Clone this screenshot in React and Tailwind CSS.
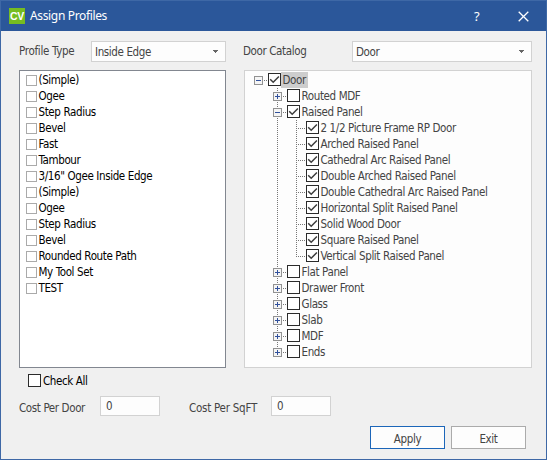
import React from "react";

const profiles = [
  "(Simple)",
  "Ogee",
  "Step Radius",
  "Bevel",
  "Fast",
  "Tambour",
  '3/16" Ogee Inside Edge',
  "(Simple)",
  "Ogee",
  "Step Radius",
  "Bevel",
  "Rounded Route Path",
  "My Tool Set",
  "TEST",
];

const catalog = [
  { label: "Door", level: 0, state: "open", checked: true, selected: true },
  { label: "Routed MDF", level: 1, state: "closed" },
  { label: "Raised Panel", level: 1, state: "open", checked: true },
  { label: "2 1/2 Picture Frame RP Door", level: 2, checked: true },
  { label: "Arched Raised Panel", level: 2, checked: true },
  { label: "Cathedral Arc Raised Panel", level: 2, checked: true },
  { label: "Double Arched Raised Panel", level: 2, checked: true },
  { label: "Double Cathedral Arc Raised Panel", level: 2, checked: true },
  { label: "Horizontal Split Raised Panel", level: 2, checked: true },
  { label: "Solid Wood Door", level: 2, checked: true },
  { label: "Square Raised Panel", level: 2, checked: true },
  { label: "Vertical Split Raised Panel", level: 2, checked: true, last: true },
  { label: "Flat Panel", level: 1, state: "closed" },
  { label: "Drawer Front", level: 1, state: "closed" },
  { label: "Glass", level: 1, state: "closed" },
  { label: "Slab", level: 1, state: "closed" },
  { label: "MDF", level: 1, state: "closed" },
  { label: "Ends", level: 1, state: "closed", last: true },
];

function Guide({ vertical, last, horizontal, state, root }) {
  return (
    <svg width="19" height="16" viewBox="0 0 19 16" shapeRendering="crispEdges" className="block shrink-0">
      {vertical && !root && (
        <path d={last ? "M9.5 0V9" : "M9.5 0V16"} stroke="#777" strokeDasharray="1 1" />
      )}
      {horizontal && <path d="M9 8.5H18" stroke="#777" strokeDasharray="1 1" />}
      {state && (
        <g>
          <rect x="5" y="4" width="9" height="9" rx="1" fill="#929292" />
          <rect x="6" y="5" width="7" height="7" fill="#f5f5f5" />
          <path d="M7 8.5H12" stroke="#31519c" />
          {state === "closed" && <path d="M9.5 6V11" stroke="#31519c" />}
        </g>
      )}
    </svg>
  );
}

function CheckBox({ checked }) {
  return (
    <span className="block size-[13px] shrink-0 border border-[#2b2b2b] bg-white">
      {checked && (
        <svg width="11" height="11" viewBox="0 0 11 11" className="block">
          <path d="M1.2 5.2L4.2 8.2L9.9 2.5" fill="none" stroke="#3c3c3c" strokeWidth="1.5" />
        </svg>
      )}
    </span>
  );
}

function TreeRow({ label, level, state, checked, selected, last }) {
  return (
    <div className="flex h-4">
      {level > 0 && <div className="w-[19px] shrink-0" />}
      {level === 2 && <Guide vertical />}
      <Guide vertical horizontal root={level === 0} last={last} state={state} />
      <div className="pt-px">
        <CheckBox checked={checked} />
      </div>
      <span className={"h-4 pl-[1.5px] leading-[17px] " + (selected ? "w-[27px] bg-[#cdcdcd]" : "")}>{label}</span>
    </div>
  );
}

function Combo({ value, className }) {
  return (
    <div className={"flex h-[21px] items-center justify-between border border-[#d2d2d2] bg-[#fdfdfd] pl-[3px] pr-[7px] " + className}>
      <span className="pt-px">{value}</span>
      <svg width="5" height="3" viewBox="0 0 5 3" shapeRendering="crispEdges">
        <path d="M0 0H5V1H4V2H3V3H2V2H1V1H0Z" fill="#666" />
      </svg>
    </div>
  );
}

export default function App() {
  return (
    <div className="flex h-[460px] w-[547px] flex-col border border-[#3e68a6] bg-[#f0f0f0] font-['DejaVu_Sans_Condensed','DejaVu_Sans',sans-serif] text-[11.5px] leading-4 font-normal tracking-[-0.38px] whitespace-nowrap text-[#444]">
      <header className="flex h-[30px] shrink-0 items-center bg-[#2b579a] font-['Noto_Sans',sans-serif] text-[12px] text-white">
        <div className="mb-px ml-2 flex h-4 w-4 items-center justify-center bg-[#76bc21] font-['Liberation_Sans',sans-serif] text-[10.5px] font-bold tracking-[-0.3px]">
          CV
        </div>
        <span className="ml-[5px] tracking-[-0.35px]">Assign Profiles</span>
        <span className="mb-px ml-auto w-[8px] text-[13px]">?</span>
        <svg className="mr-[17px] ml-[36px]" width="11" height="11" viewBox="0 0 11 11">
          <path d="M.7 .7L10.3 10.3M10.3 .7L.7 10.3" stroke="#fff" strokeWidth="1.3" />
        </svg>
      </header>
      <div className="flex h-[31px] items-end pl-[18px]">
        <span className="w-[72px] pb-[3px] tracking-[-0.3px]">Profile Type</span>
        <Combo value="Inside Edge" className="w-[135px]" />
        <span className="ml-[17px] w-[109px] pb-[3px]">Door Catalog</span>
        <Combo value="Door" className="w-[180px]" />
      </div>
      <div className="mt-2 flex h-[298px] gap-[18px] pl-[18px]">
        <div className="w-[207px] border border-[#828790] bg-white pt-px pl-[6px] text-black">
          {profiles.map((name, i) => (
            <div key={i} className="flex h-4">
              <span className="mt-[3px] mr-[1.5px] block size-[11px] border border-[#aaa] bg-white" />
              <span className="leading-[17px]">{name}</span>
            </div>
          ))}
        </div>
        <div className="w-[288px] border border-[#d2d2d2] bg-[#fdfdfd] pt-px pl-1">
          {catalog.map((node) => (
            <TreeRow key={node.label} {...node} />
          ))}
        </div>
      </div>
      <div className="mt-[5px] flex h-4 gap-[2px] pl-[27px] text-black">
        <div className="pt-px">
          <CheckBox />
        </div>
        <span className="leading-[17px]">Check All</span>
      </div>
      <div className="mt-[7px] flex h-5 items-center pl-[18px]">
        <span className="w-[81px] pt-[3px]">Cost Per Door</span>
        <div className="h-5 w-[60px] border border-[#d2d2d2] bg-[#fdfdfd] pt-px pl-[5px]">0</div>
        <span className="ml-[29px] w-[82px] pt-[3px] tracking-[-0.25px]">Cost Per SqFT</span>
        <div className="h-5 w-[60px] border border-[#d2d2d2] bg-[#fdfdfd] pt-px pl-[5px]">0</div>
      </div>
      <div className="mt-[10px] flex gap-[6px] pl-[369px]">
        <button className="h-[23px] w-[75px] border border-[#1c66b9] bg-[#fdfdfd] pt-[2px]">Apply</button>
        <button className="h-[23px] w-[75px] border border-[#ababab] bg-[#fdfdfd] pt-[2px]">Exit</button>
      </div>
    </div>
  );
}
